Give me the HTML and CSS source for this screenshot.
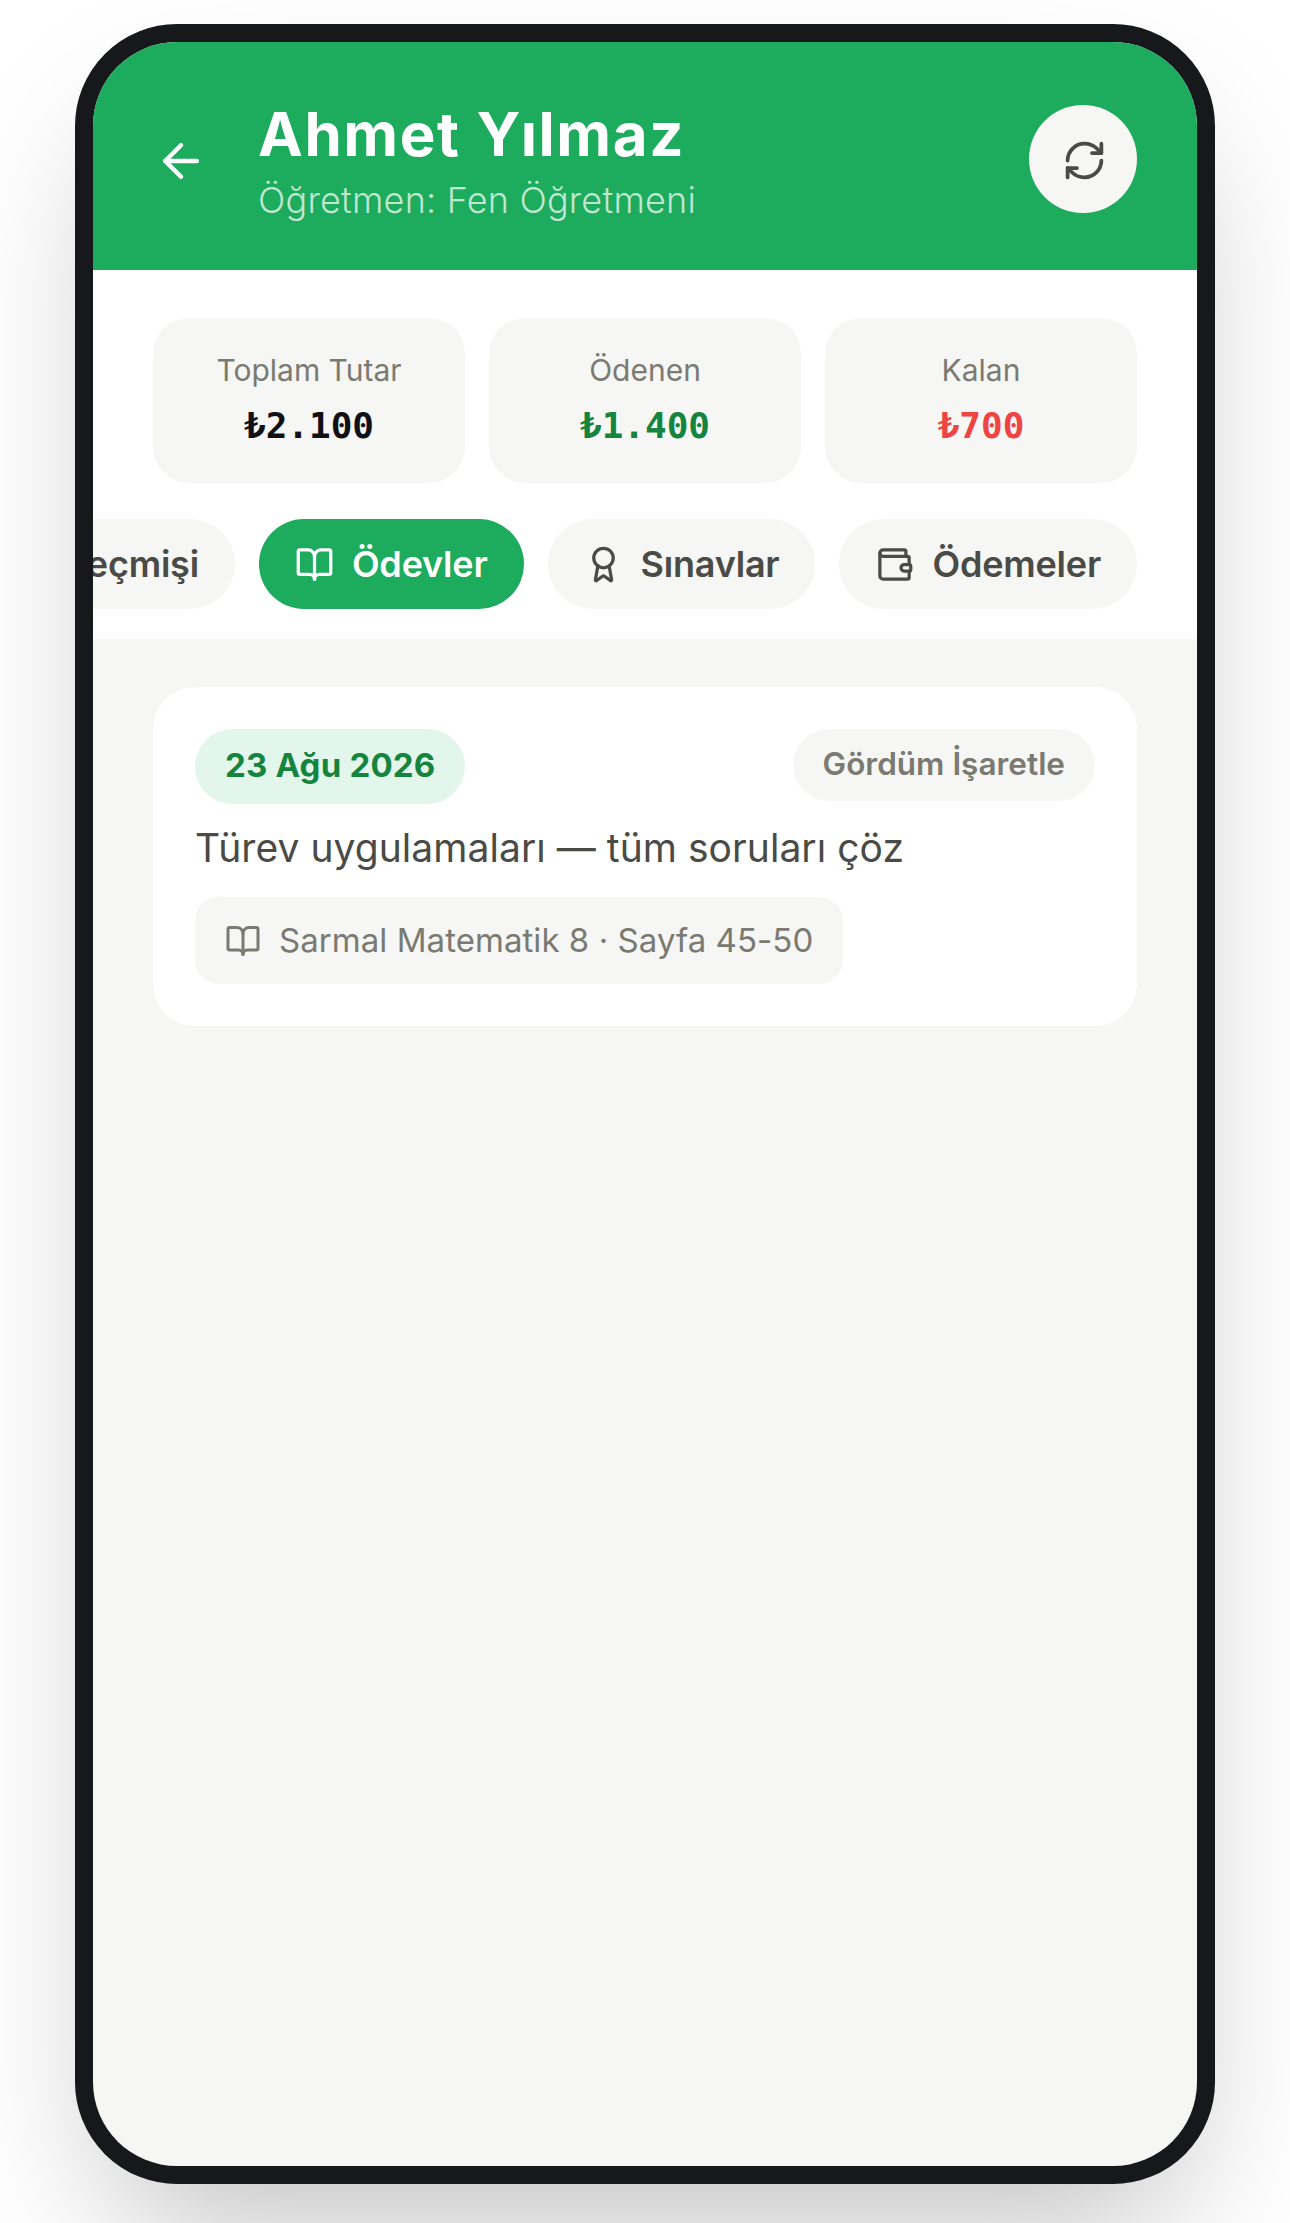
FILE: index.html
```html
<!DOCTYPE html>
<html lang="tr">
<head>
<meta charset="utf-8">
<title>Ahmet Yılmaz</title>
<link rel="stylesheet" href="styles.css">
</head>
<body>
<div class="phone">
  <div class="screen">
    <header class="head">
      <button class="back" aria-label="Geri">
        <svg class="ic-back" viewBox="0 0 24 24"><path d="m12 19-7-7 7-7"/><path d="M19 12H5"/></svg>
      </button>
      <div class="who">
        <h1 class="name">Ahmet Yılmaz</h1>
        <p class="role">Öğretmen: Fen Öğretmeni</p>
      </div>
      <button class="refresh" aria-label="Yenile">
        <svg class="ic-refresh" viewBox="0 0 24 24"><path d="M3 12a9 9 0 0 1 9-9 9.75 9.75 0 0 1 6.74 2.74L21 8"/><path d="M21 3v5h-5"/><path d="M21 12a9 9 0 0 1-9 9 9.75 9.75 0 0 1-6.74-2.74L3 16"/><path d="M8 16H3v5"/></svg>
      </button>
    </header>
    <section class="top">
      <div class="stats">
        <div class="stat"><span class="label">Toplam Tutar</span><span class="money">₺2.100</span></div>
        <div class="stat"><span class="label">Ödenen</span><span class="money paid">₺1.400</span></div>
        <div class="stat"><span class="label">Kalan</span><span class="money due">₺700</span></div>
      </div>
      <nav class="tabs">
        <a class="tab"><span>Ders Geçmişi</span></a>
        <a class="tab active">
          <svg class="ic" viewBox="0 0 24 24"><path d="M12 7v14"/><path d="M3 18a1 1 0 0 1-1-1V4a1 1 0 0 1 1-1h5a4 4 0 0 1 4 4 4 4 0 0 1 4-4h5a1 1 0 0 1 1 1v13a1 1 0 0 1-1 1h-6a3 3 0 0 0-3 3 3 3 0 0 0-3-3z"/></svg>
          <span>Ödevler</span>
        </a>
        <a class="tab">
          <svg class="ic" viewBox="0 0 24 24"><path d="m15.477 12.89 1.515 8.526a.5.5 0 0 1-.81.47l-3.58-2.687a1 1 0 0 0-1.197 0l-3.586 2.686a.5.5 0 0 1-.81-.469l1.514-8.526"/><circle cx="12" cy="8" r="6"/></svg>
          <span>Sınavlar</span>
        </a>
        <a class="tab">
          <svg class="ic" viewBox="0 0 24 24"><path d="M19 7V4a1 1 0 0 0-1-1H5a2 2 0 0 0 0 4h15a1 1 0 0 1 1 1v4h-3a2 2 0 0 0 0 4h3a1 1 0 0 0 1-1v-2a1 1 0 0 0-1-1"/><path d="M3 5v14a2 2 0 0 0 2 2h15a1 1 0 0 0 1-1v-4"/></svg>
          <span>Ödemeler</span>
        </a>
      </nav>
    </section>
    <main class="body">
      <article class="card">
        <div class="card-top">
          <span class="date">23 Ağu 2026</span>
          <button class="seen">Gördüm İşaretle</button>
        </div>
        <p class="task">Türev uygulamaları — tüm soruları çöz</p>
        <div class="source">
          <svg class="ic-src" viewBox="0 0 24 24"><path d="M12 7v14"/><path d="M3 18a1 1 0 0 1-1-1V4a1 1 0 0 1 1-1h5a4 4 0 0 1 4 4 4 4 0 0 1 4-4h5a1 1 0 0 1 1 1v13a1 1 0 0 1-1 1h-6a3 3 0 0 0-3 3 3 3 0 0 0-3-3z"/></svg>
          <span class="source-text">Sarmal Matematik 8 · Sayfa 45-50</span>
        </div>
      </article>
    </main>
  </div>
</div>
</body>
</html>
```
FILE: styles.css
```css
* { box-sizing: border-box; }
html, body { margin: 0; height: 100%; background: #fff; overflow: hidden; }
body { padding-top: 24px; font-family: Inter, "Liberation Sans", sans-serif; color: #4a4a46; }
button { font: inherit; border: 0; padding: 0; background: none; }
svg { fill: none; stroke: currentColor; stroke-width: 2; stroke-linecap: round; stroke-linejoin: round; display: block; flex: none; }
h1, p { margin: 0; }

.phone {
  width: 1140px; height: 2160px; margin: 0 auto;
  border: 18px solid #17181c; border-radius: 102px;
  background: #17181c;
  box-shadow: 0 75px 150px -36px rgba(0,0,0,.25);
}
.screen {
  height: 100%; border-radius: 84px; overflow: hidden;
  background: #f6f6f4; display: flex; flex-direction: column;
}

.head {
  height: 228px; flex: none; background: #1dab5d; color: #fff;
  display: flex; align-items: center; padding: 6px 60px 0;
}
.back { width: 54px; height: 54px; margin: 3px 50px 0 1px; color: #fff; flex: none; }
.ic-back { width: 54px; height: 54px; }
.who { flex: 1; min-width: 0; margin-top: 4px; }
.name { font-size: 60px; line-height: 72px; font-weight: 700; letter-spacing: 1.6px; }
.role { font-size: 36px; line-height: 48px; font-weight: 300; letter-spacing: .2px; color: rgba(255,255,255,.72); margin-top: 6px; }
.refresh {
  width: 108px; height: 108px; border-radius: 50%; background: #f6f6f4; color: #4a4a46;
  display: flex; align-items: center; justify-content: center; flex: none;
}
.ic-refresh { width: 45px; height: 45px; margin: 3px 0 0 3px; }

.top { background: #fff; padding: 48px 0 30px; flex: none; }
.stats { display: grid; grid-template-columns: repeat(3, 1fr); gap: 24px; padding: 0 60px; }
.stat {
  height: 165px; padding-top: 31px; background: #f6f6f4; border-radius: 36px;
  display: flex; flex-direction: column; align-items: center;
}
.label { font-size: 30px; line-height: 42px; color: #7a7a72; }
.money { font-family: "DejaVu Sans Mono", monospace; font-weight: 700; font-size: 36px; line-height: 48px; color: #111114; margin-top: 11px; }
.paid { color: #15843f; }
.due { color: #ef4444; }

.tabs {
  display: flex; justify-content: flex-end; gap: 24px;
  padding: 0 60px; margin-top: 36px; overflow: hidden;
}
.tab {
  height: 90px; flex: none; padding: 0 36px; border-radius: 45px; background: #f6f6f4;
  display: flex; align-items: center; gap: 18px;
  font-size: 36px; font-weight: 600; letter-spacing: -.2px; color: #4a4a46;
}
.tab.active { background: #1dab5d; color: #fff; }
.ic { width: 39px; height: 39px; }

.body { padding: 48px 60px; flex: 1; }
.card { background: #fff; border-radius: 42px; padding: 42px; height: 339px; }
.card-top { display: flex; justify-content: space-between; align-items: flex-start; }
.date {
  height: 75px; padding: 0 30px 3px; border-radius: 38px; background: #e2f6ec; color: #15843f;
  font-size: 33px; font-weight: 700; letter-spacing: .2px; display: flex; align-items: center;
}
.seen {
  height: 72px; padding: 0 30px 4px; border-radius: 36px; background: #f6f6f4; color: #7a7a72;
  font-size: 31.5px; font-weight: 600;
}
.task { font-size: 39px; line-height: 57px; margin-top: 15px; color: #4a4a46; letter-spacing: .05px; }
.source {
  display: inline-flex; align-items: center; gap: 18px; margin-top: 21px;
  height: 87px; padding: 0 30px; background: #f6f6f4; border-radius: 24px;
  font-size: 33px; color: #7a7a72;
}
.source-text { letter-spacing: .05px; padding-bottom: 2px; }
.ic-src { width: 36px; height: 36px; }
```
